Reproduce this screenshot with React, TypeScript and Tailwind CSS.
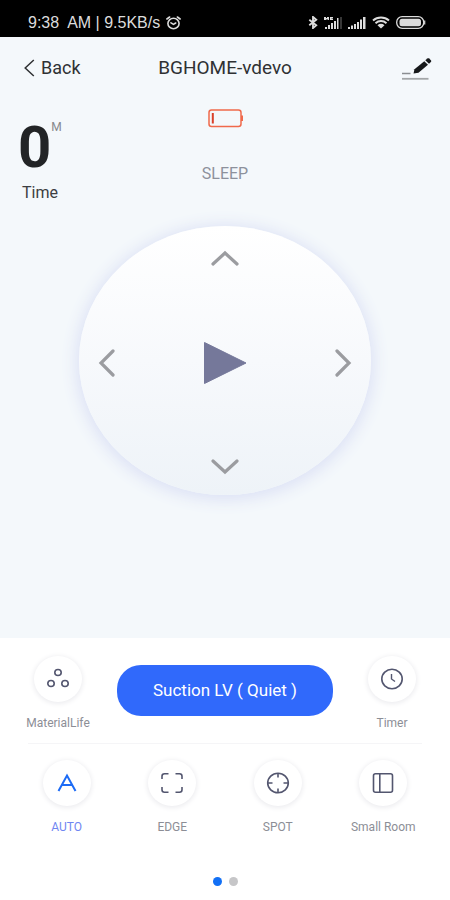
import React from 'react';

const StatusBar: React.FC = () => {
  return (
    <div className="flex h-[37px] items-center justify-between bg-black pt-2 pr-6 pl-7 text-[#dcdcdc]">
      <div className="flex items-center gap-1.5 font-['Liberation_Sans',Arial,sans-serif] text-base leading-5 whitespace-pre">
        <span>9:38  AM | 9.5KB/s</span>
        <svg width="15" height="14" viewBox="0 0 15 14" fill="none" stroke="currentColor" strokeWidth="1.6" strokeLinecap="round">
          <ellipse cx="7.5" cy="7.5" rx="5.6" ry="5.2" />
          <path d="M5 6.8l2.5 1.6 2.2-1.4M.9 3l2.7-2M14.1 3l-2.7-2" />
        </svg>
      </div>
      <div className="flex items-center">
        <svg className="mr-1.5" width="10" height="13" viewBox="0 0 10 14" fill="none" stroke="currentColor" strokeWidth="2">
          <path d="M1 4l7.500 6L5 13V1l3.500 3L1 10" />
        </svg>
        <svg className="mr-1.5" width="18" height="13" viewBox="0 0 18 13" fill="currentColor">
          <path d="M0 1h2v1h1V1h2v3H3.500v-1h-1v1H0zM6 1h3v1H7.500v.5H9V4H6zM1 11h2v2H1zM4 9h2v4H4zM7 7h2v6H7zM10 5h2v8h-2zM13 2h1.500v11H13z" />
          <path d="M16.500 1h1v12h-1z" opacity="0.5" />
        </svg>
        <svg className="mr-1.5" width="18" height="13" viewBox="0 0 18 13" fill="currentColor">
          <path d="M0 11h2v2H0zM3 9.500h2V13H3zM6 8h2v5H6zM9 6h2v7H9zM12 3.500h2V13h-2zM15 1h2.500v12H15z" />
        </svg>
        <svg className="mr-1.5" width="18" height="13" viewBox="0 0 18 13" fill="none" stroke="currentColor" strokeWidth="1.9">
          <path d="M1 4.500c4.500-4 11.500-4 16 0M3.500 7.200c3.200-2.900 7.800-2.900 11 0" />
          <path d="M5.500 9.200c2.200-1.900 4.800-1.900 7 0L9 12.500z" fill="currentColor" stroke="none" />
        </svg>
        <svg width="30" height="13" viewBox="0 0 30 13">
          <rect x="0.700" y="0.700" width="27" height="11.600" rx="5.500" fill="none" stroke="currentColor" strokeWidth="1.300" />
          <rect x="3.500" y="2.800" width="21.500" height="7.400" rx="2.500" fill="currentColor" />
          <path d="M28.700 4.500v4" stroke="currentColor" strokeWidth="1.200" />
        </svg>
      </div>
    </div>
  );
};

const Header: React.FC = () => {
  return (
    <header className="grid h-[62px] grid-cols-[1fr_auto_1fr] items-center px-[18px] text-[#2f3133]">
      <button type="button" className="flex items-center gap-1.5 justify-self-start pl-1.5 text-lg">
        <svg width="11" height="18" viewBox="0 0 11 18" fill="none" stroke="currentColor" strokeWidth="1.5">
          <path d="M9.800 1L1.200 9l8.600 8" />
        </svg>
        Back
      </button>
      <h1 className="text-[19px]">BGHOME-vdevo</h1>
      <button type="button" aria-label="Rename" className="justify-self-end">
        <svg width="31" height="23" viewBox="0 0 31 23">
          <path d="M1 16.500h8.500" stroke="#8b8e91" strokeWidth="1.500" />
          <path d="M1 21.800h26.500" stroke="#a3a6a8" strokeWidth="1.800" />
          <path d="M12.500 16.500l1-4.200L23.300 4.200l3.700 3.500-9.500 8z" fill="#16181a" />
          <path d="M24.300 3.300l2-1.700c.6-.5 1.300-.5 1.900 0l1.700 1.600c.5.500.5 1.200 0 1.700l-1.900 1.800z" fill="#16181a" />
        </svg>
      </button>
    </header>
  );
};

const directions = [
  { label: 'Forward', place: 'col-start-2 row-start-1 self-start', d: 'M2 14L14 3l12 11', w: 28, h: 17 },
  { label: 'Left', place: 'col-start-1 row-start-2 justify-self-start', d: 'M15 2L3 14l12 12', w: 17, h: 28 },
  { label: 'Right', place: 'col-start-3 row-start-2 justify-self-end', d: 'M2 2l12 12L2 26', w: 17, h: 28 },
  { label: 'Backward', place: 'col-start-2 row-start-3 self-end', d: 'M2 3l12 11L26 3', w: 28, h: 17 },
];

const Dial: React.FC = () => {
  return (
    <div className="mx-auto grid aspect-[292/269] w-[65%] grid-cols-[1fr_auto_1fr] grid-rows-[1fr_auto_1fr] place-items-center rounded-[50%] bg-linear-to-b from-white via-[#f7f9fc] to-[#eef3f8] px-[19px] pt-6 pb-5 shadow-[0_2px_16px_3px_#dce1f5]">
      {directions.map((dir) => (
        <button key={dir.label} type="button" aria-label={dir.label} className={dir.place}>
          <svg width={dir.w} height={dir.h} viewBox={`0 0 ${dir.w} ${dir.h}`} fill="none" stroke="#9b9ca0" strokeWidth="3.200" strokeLinecap="round">
            <path d={dir.d} />
          </svg>
        </button>
      ))}
      <button type="button" aria-label="Start" className="col-start-2 row-start-2">
        <svg width="44" height="44" viewBox="0 0 44 44">
          <path d="M1.500 1.500L43 22 1.500 42.500z" fill="#75789a" stroke="#75789a" strokeLinejoin="round" />
        </svg>
      </button>
    </div>
  );
};

interface RoundActionProps {
  label: string;
  active?: boolean;
  children: React.ReactNode;
}

const RoundAction: React.FC<RoundActionProps> = ({ label, active, children }) => {
  return (
    <button type="button" className={`flex flex-col items-center gap-[13px] ${active ? 'text-[#1c6bf5]' : 'text-[#53566f]'}`}>
      <span className="flex h-[46px] w-12 items-center justify-center rounded-[50%] bg-white shadow-[0_1px_5px_1px_#ededf0]">
        <svg width="24" height="22" viewBox="0 0 24 22" fill="none" stroke="currentColor" strokeWidth="1.600">
          {children}
        </svg>
      </span>
      <span className={`text-xs whitespace-nowrap ${active ? 'text-[#6f86f2]' : 'text-[#8c8e96]'}`}>{label}</span>
    </button>
  );
};

const App: React.FC = () => {
  return (
    <div className="flex min-h-screen flex-col bg-white font-[Roboto,sans-serif]">
      <StatusBar />

      <main className="flex-1 bg-[#f4f8fb]">
        <Header />
        <section className="grid h-[127px] grid-cols-[1fr_auto_1fr] px-[18px]">
          <div className="flex flex-col items-start pt-[18px]">
            <div className="flex items-start">
              <span className="text-[58px] leading-[60px] font-bold text-[#222426]">0</span>
              <span className="text-xs leading-5 text-[#85888c]">M</span>
            </div>
            <span className="px-1 text-base leading-8 text-[#3c3e42]">Time</span>
          </div>
          <div className="flex flex-col items-center gap-9 pt-2.5">
            <svg width="35" height="19" viewBox="0 0 35 19" fill="none" stroke="#f0694b">
              <rect x="1" y="1" width="32" height="16.500" rx="2.500" strokeWidth="1.500" />
              <path d="M4.800 4v10.500" stroke="#d9402a" strokeWidth="2" />
              <path d="M34 6.500v5.500" strokeWidth="2" />
            </svg>
            <span className="text-base leading-5 text-[#8d919c]">SLEEP</span>
          </div>
        </section>
        <Dial />
      </main>

      <footer className="px-3.5 pt-[18px]">
        <div className="grid grid-cols-[88px_1fr_88px] items-start gap-[15px]">
          <RoundAction label="MaterialLife">
            <ellipse cx="12" cy="4.500" rx="3.200" ry="3" />
            <ellipse cx="5" cy="15.500" rx="3.200" ry="3" />
            <ellipse cx="19" cy="15.500" rx="3.200" ry="3" />
          </RoundAction>
          <button type="button" className="mt-[9px] h-[51px] rounded-3xl bg-[#3069fb] text-[17px] text-white">
            Suction LV&nbsp;( Quiet )
          </button>
          <RoundAction label="Timer">
            <ellipse cx="12" cy="11" rx="10.200" ry="9.700" />
            <path d="M11.500 6v5l3.500 2.500" strokeWidth="1.400" />
          </RoundAction>
        </div>

        <hr className="mx-3.5 mt-3 border-[#f5f5f7]" />

        <div className="grid grid-cols-4 pt-4">
          <RoundAction label="AUTO" active>
            <path d="M3.500 19L12 3.500 20.500 19M7.500 13h9" strokeWidth="2" />
          </RoundAction>
          <RoundAction label="EDGE">
            <path d="M8.500 1.800H4.500Q2 1.800 2 4.200V7M15.500 1.800h4Q22 1.800 22 4.200V7M2 15v2.800q0 2.400 2.500 2.400h4M22 15v2.800q0 2.400-2.500 2.400h-4" />
          </RoundAction>
          <RoundAction label="SPOT">
            <ellipse cx="12" cy="11" rx="10.300" ry="9.800" />
            <path d="M12 1v4.500M12 16.500V21M2 11h4.500M17.500 11H22" />
          </RoundAction>
          <RoundAction label="Small Room">
            <rect x="2.500" y="1.800" width="19" height="18.400" rx="2" />
            <path d="M8.800 2v18" />
          </RoundAction>
        </div>

        <div className="flex justify-center gap-[7px] pt-[42px] pb-3.5">
          <span className="h-[9px] w-[9px] rounded-full bg-[#1270f5]" />
          <span className="h-[9px] w-[9px] rounded-full bg-[#c6c6c8]" />
        </div>
      </footer>
    </div>
  );
};

export default App;
